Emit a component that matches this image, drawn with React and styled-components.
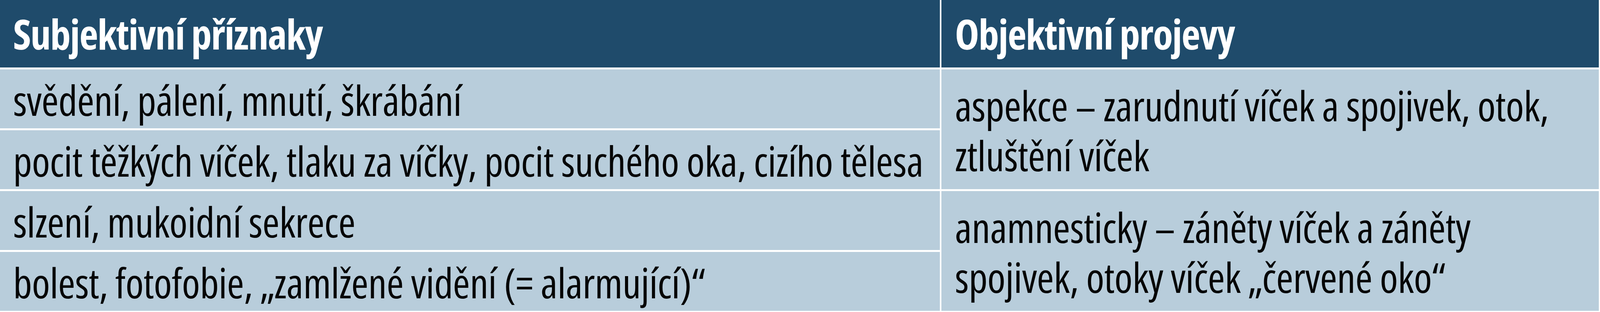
import React from "react";
import styled, { createGlobalStyle } from "styled-components";

const GlobalStyle = createGlobalStyle`
  html, body { margin: 0; padding: 0; background: #ffffff; overflow: hidden; }
`;

const Table = styled.div`
  display: grid;
  width: 100%;
  box-sizing: border-box;
  grid-template-columns: 3093fr 2163fr;
  grid-template-rows: 173px repeat(4, 151px);
  column-gap: 0.11vw;
  row-gap: 5px;
  padding: 0 0.076vw 3px 0;
  background: #ffffff;
  font-family: "Open Sans", "Noto Sans", sans-serif;
`;

const HeadCell = styled.div`
  display: flex;
  align-items: center;
  min-width: 0;
  padding-left: ${(p) => (p.$right ? "0.835vw" : "0.817vw")};
  background: #1f4b6b;
  color: #ffffff;
  font-weight: 700;
  font-size: 105px;
  font-stretch: 85%;
  white-space: nowrap;
  overflow: hidden;

  @media (max-width: 4600px) {
    font-stretch: 75%;
    letter-spacing: -1.75px;
  }
`;

const Cell = styled.div`
  display: flex;
  align-items: center;
  min-width: 0;
  padding: 4px 0 0 ${(p) => (p.$right ? "0.835vw" : "0.817vw")};
  background: #b8cddb;
  color: #050505;
  font-weight: 400;
  font-size: 106px;
  font-stretch: 86%;
  line-height: 128px;
  white-space: nowrap;
  overflow: hidden;
  grid-column: ${(p) => (p.$right ? 2 : 1)};
  grid-row: ${(p) => p.$row};

  @media (max-width: 4600px) {
    font-stretch: 75%;
    letter-spacing: -0.55px;
  }
`;

const Text = styled.p`
  margin: 0;
`;

const left = [
  "svědění, pálení, mnutí, škrábání",
  "pocit těžkých víček, tlaku za víčky, pocit suchého oka, cizího tělesa",
  "slzení, mukoidní sekrece",
  "bolest, fotofobie, „zamlžené vidění (= alarmující)“",
];

const right = [
  ["aspekce – zarudnutí víček a spojivek, otok,", "ztluštění víček"],
  ["anamnesticky – záněty víček a záněty", "spojivek, otoky víček „červené oko“"],
];

export default function App() {
  return (
    <>
      <GlobalStyle />
      <Table>
        <HeadCell>Subjektivní příznaky</HeadCell>
        <HeadCell $right>Objektivní projevy</HeadCell>
        {left.map((t, i) => (
          <Cell key={t} $row={`${i + 2}`}>
            <Text>{t}</Text>
          </Cell>
        ))}
        {right.map((lines, i) => (
          <Cell key={lines[0]} $right $row={`${i * 2 + 2} / span 2`}>
            <Text>
              {lines[0]}
              <br />
              {lines[1]}
            </Text>
          </Cell>
        ))}
      </Table>
    </>
  );
}
